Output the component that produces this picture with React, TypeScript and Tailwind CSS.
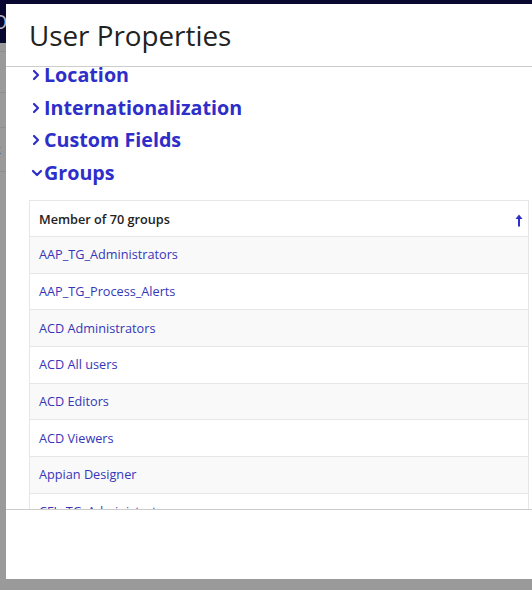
import React from "react";

const groups = [
  "AAP_TG_Administrators",
  "AAP_TG_Process_Alerts",
  "ACD Administrators",
  "ACD All users",
  "ACD Editors",
  "ACD Viewers",
  "Appian Designer",
  "CFL_TG_Administrators",
  "CFL_TG_Users",
];

function ChevronRight() {
  return (
    <svg width="10" height="12" viewBox="0 0 10 12" className="shrink-0">
      <path d="M3 2 L7 6 L3 10" fill="none" stroke="#2e2ec8" strokeWidth="2.2" strokeLinecap="round" strokeLinejoin="round" />
    </svg>
  );
}

function ChevronDown() {
  return (
    <svg width="12" height="10" viewBox="0 0 12 10" className="shrink-0">
      <path d="M2 3 L6 7 L10 3" fill="none" stroke="#2e2ec8" strokeWidth="2.2" strokeLinecap="round" strokeLinejoin="round" />
    </svg>
  );
}

function SortUp() {
  return (
    <svg width="8" height="13" viewBox="0 0 8 13">
      <path d="M4 0.5 L7.5 5 L0.5 5 Z" fill="#2e2ec8" />
      <path d="M4 4 L4 12.5" stroke="#2e2ec8" strokeWidth="2" />
    </svg>
  );
}

function Section({ label, open }: { label: string; open?: boolean }) {
  return (
    <div className="flex h-[32.5px] items-center">
      <div className="flex w-[13px] items-center">{open ? <ChevronDown /> : <ChevronRight />}</div>
      <span className="text-[19.7px] font-bold text-[#2e2ec8] leading-none">{label}</span>
    </div>
  );
}

export default function App() {
  return (
    <div
      className="relative h-[590px] w-[532px] overflow-hidden bg-[#9a9a9a]"
      style={{ fontFamily: '"Open Sans", "Noto Sans", sans-serif' }}
    >
      {/* dimmed page behind the dialog */}
      <div className="h-[43px] bg-[#07072f] text-white">
        <span className="ml-[-8px] text-[20px] leading-[43px] text-[#b8b8c8]">O</span>
      </div>
      <div className="flex flex-col text-[13px]">
        <div className="h-[9px] border-b border-[#8f8f8f]" />
        <div className="h-[41px] border-b border-[#8f8f8f]" />
        <div className="flex h-[35px] items-center border-b border-[#8f8f8f]">
          <span className="ml-[-14px] text-[#1a1a1a]">ar</span>
        </div>
        <div className="flex h-[44px] items-center border-b border-[#8f8f8f]">
          <span className="ml-[-6px] text-[#3a3a8a]">k</span>
        </div>
      </div>

      {/* dialog */}
      <div className="absolute left-[6px] top-[4px] flex h-[575px] w-[560px] flex-col bg-white">
        <div className="flex h-[63px] shrink-0 items-center border-b border-[#cccccc] pl-[23px]">
          <h1 className="mt-[2px] text-[27.8px] font-normal text-[#222222]">User Properties</h1>
        </div>
        <div className="h-[442px] shrink-0 overflow-hidden pl-[23px]">
          <div className="mt-[-8px] pl-[2px]">
            <Section label="Location" />
            <Section label="Internationalization" />
            <Section label="Custom Fields" />
            <Section label="Groups" open />
          </div>
          <div className="mt-[11px] w-[500px] border border-[#e6e6e6]">
            <div className="flex h-[35px] items-center justify-between pl-[9px] pr-[5px] pt-[3px]">
              <span className="text-[12.7px] font-semibold text-[#222222]">Member of 70 groups</span>
              <SortUp />
            </div>
            {groups.map((g, i) => (
              <div
                key={g}
                className={`flex h-[36.67px] items-center border-t border-[#e6e6e6] pl-[9px] ${
                  i % 2 === 0 ? "bg-[#f9f9f9]" : "bg-white"
                }`}
              >
                <span className="text-[12.7px] text-[#3636b8]">{g}</span>
              </div>
            ))}
          </div>
        </div>
        <div className="flex-1 border-t border-[#cccccc]" />
      </div>
    </div>
  );
}
